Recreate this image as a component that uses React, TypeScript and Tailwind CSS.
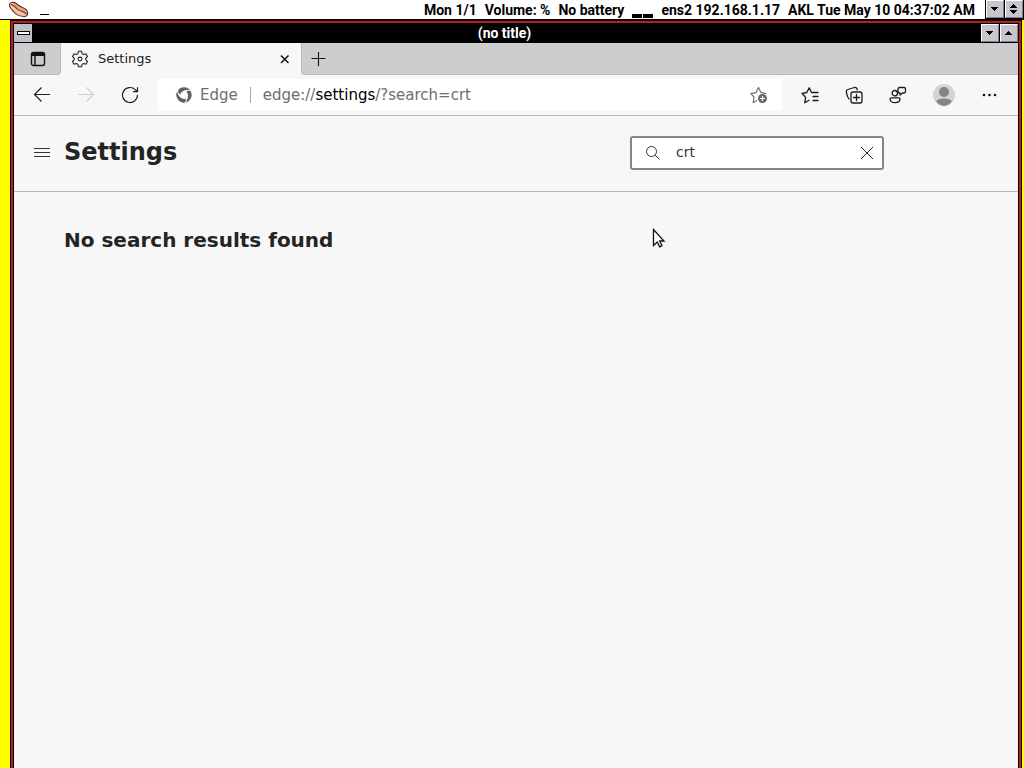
import { useState } from "react";
import type { ReactNode } from "react";

const statusItems = ["Mon 1/1", "Volume: %", "No battery"];

function BevelButton({ label, children }: { label: string; children: ReactNode }) {
  return (
    <button
      aria-label={label}
      className="flex h-[18px] w-[18px] shrink-0 items-center justify-center border border-t-white border-r-[#808088] border-b-[#808088] border-l-white bg-[#c6c6cc]"
    >
      {children}
    </button>
  );
}

function DownArrow() {
  return (
    <svg width="8" height="4" viewBox="0 0 8 4" shapeRendering="crispEdges">
      <path d="M0 0h7v1H0zM1 1h5v1H1zM2 2h3v1H2zM3 3h1v1H3z" fill="#000" />
    </svg>
  );
}

function UpArrow() {
  return (
    <svg width="8" height="4" viewBox="0 0 8 4" shapeRendering="crispEdges">
      <path d="M3 0h1v1H3zM2 1h3v1H2zM1 2h5v1H1zM0 3h7v1H0z" fill="#000" />
    </svg>
  );
}

function HotDog() {
  return (
    <svg width="22" height="18" viewBox="0 0 22 18">
      <path d="M2 2.500C4 0 7.500 1.500 10 4c2.500 2.200 6 2.500 8.500 5 2 2.500 1.500 6.500-2 6.500-4.500 0-9-2-11.500-5.500C3 8 .5 5 2 2.500z" fill="#f6c3a8" stroke="#5c2a1c" strokeWidth="1.100" />
      <path d="M3 3.500c2.500 0 4.500 3 7 5 3 2 6 1.500 8.500 4.500" fill="none" stroke="#8d3424" strokeWidth="1.200" />
      <path d="M5 2.500c2 .3 4 2.500 6 4s4.500 1.500 6.500 3.500" fill="none" stroke="#e09a78" strokeWidth="1.200" />
    </svg>
  );
}

function StatusBar() {
  return (
    <header className="flex h-5 shrink-0 items-center border-b border-black bg-white pl-2 font-[Roboto,'Liberation_Sans',sans-serif] text-[14px] leading-4 font-bold text-black">
      <HotDog />
      <span className="ml-2.5 mt-2.5 h-px w-[9px] bg-black" />
      <div className="ml-auto flex items-center gap-2 pr-2.5 whitespace-nowrap">
        {statusItems.map((item) => (
          <span key={item}>{item}</span>
        ))}
        <span className="mt-3 flex gap-px">
          <span className="h-1 w-2.5 bg-black" />
          <span className="h-1 w-2.5 bg-black" />
        </span>
        <span>ens2 192.168.1.17</span>
        <span>AKL Tue May 10 04:37:02 AM</span>
      </div>
      <div className="flex h-full gap-px border-x border-black bg-black">
        <BevelButton label="Minimize">
          <DownArrow />
        </BevelButton>
        <BevelButton label="Restore">
          <span className="flex flex-col gap-0.5">
            <UpArrow />
            <DownArrow />
          </span>
        </BevelButton>
      </div>
    </header>
  );
}

function TitleBar() {
  return (
    <div className="flex h-[19px] shrink-0 items-center border-b border-black bg-black font-[Roboto,'Liberation_Sans',sans-serif] text-[14px] leading-4 font-bold text-white">
      <button aria-label="Window menu" className="flex h-[18px] w-[18px] items-center justify-center bg-[#c0c0c8]">
        <span className="h-1 w-[13px] border border-black bg-white" />
      </button>
      <span className="flex-1 pr-1 text-center">(no title)</span>
      <div className="flex gap-px">
        <BevelButton label="Minimize window">
          <DownArrow />
        </BevelButton>
        <BevelButton label="Maximize window">
          <UpArrow />
        </BevelButton>
      </div>
    </div>
  );
}

function TabStrip() {
  return (
    <div className="flex h-8 shrink-0 bg-[#f7f7f7]">
      <button aria-label="Tab actions" className="flex w-[47px] items-center justify-center rounded-br-[4px] border-r border-b border-[#b9b9b9] bg-[#cdcdcd] pl-0.5">
        <svg width="16" height="16" viewBox="0 0 16 16" fill="none" stroke="#111">
          <rect x="1.500" y="1.500" width="13" height="13" rx="2" strokeWidth="1.400" />
          <path d="M1.500 3.500v-.5a1.500 1.500 0 0 1 1.500-1.500h10a1.500 1.500 0 0 1 1.500 1.500v1.500h-13z" fill="#111" />
          <path d="M5 4v10.500" strokeWidth="1.400" />
        </svg>
      </button>
      <div className="flex w-60 items-center pr-[7px] pl-2.5">
        <svg width="18" height="18" viewBox="0 0 18 18" fill="none" stroke="#222" strokeWidth="1.100" strokeLinejoin="round">
          <path d="M7.400 1.300h3.200l.5 2.300 1.500.9 2.300-.7 1.600 2.700L14.800 8.100v1.800l1.700 1.600-1.600 2.700-2.300-.7-1.500.9-.5 2.300H7.400l-.5-2.300-1.500-.9-2.300.7-1.600-2.700 1.700-1.600V8.100L1.500 6.500l1.600-2.700 2.300.7 1.500-.9z" />
          <circle cx="9" cy="9" r="1.900" />
        </svg>
        <span className="ml-[9px] text-[13px] leading-4 text-[#202020]">Settings</span>
        <button aria-label="Close tab" className="ml-auto p-1">
          <svg width="10" height="10" viewBox="0 0 10 10" stroke="#111" strokeWidth="1.500">
            <path d="M1 1.500l7.500 7.500M8.500 1.500L1 9" />
          </svg>
        </button>
      </div>
      <div className="flex flex-1 items-center rounded-bl-[4px] border-b border-l border-[#b9b9b9] bg-[#cdcdcd] pl-2">
        <button aria-label="New tab">
          <svg width="16" height="16" viewBox="0 0 16 16" stroke="#111" strokeWidth="1.100">
            <path d="M8.500 1v14M1.500 7.500h14" />
          </svg>
        </button>
      </div>
    </div>
  );
}

const blade = "M1.800 5.200C3.800 1.300 8.600-.2 12.600 1.600c2.300 1 3.700 2.800 4.200 5.200-1.300-1.600-3.600-2.400-5.800-2.200C8 4.900 5.900 6.500 5.400 9 3.200 8.700 1.700 7.200 1.800 5.200z";

function EdgeLogo() {
  return (
    <svg width="18" height="18" viewBox="0 0 18 18" fill="#5f6164" stroke="#fff" strokeWidth=".9" strokeLinejoin="round">
      <path d={blade} />
      <path d={blade} transform="rotate(120 9 9)" />
      <path d={blade} transform="rotate(240 9 9)" />
    </svg>
  );
}

function Toolbar() {
  return (
    <nav className="flex h-[41px] shrink-0 items-center border-b border-[#b5b5b5] bg-[#f7f7f7] pl-[19px] pr-[21px]">
      <div className="flex w-[125px] gap-[26px]">
        <button aria-label="Back">
          <svg width="18" height="18" viewBox="0 0 18 18" fill="none" stroke="#222" strokeWidth="1.200">
            <path d="M17 8.500H1.500M8.500 1.500l-7 7 7 7" />
          </svg>
        </button>
        <button aria-label="Forward" disabled>
          <svg width="18" height="18" viewBox="0 0 18 18" fill="none" stroke="#cecece" strokeWidth="1.200">
            <path d="M1 8.500h15.500M9.500 1.500l7 7-7 7" />
          </svg>
        </button>
        <button aria-label="Refresh">
          <svg width="18" height="18" viewBox="0 0 18 18" fill="none" stroke="#222" strokeWidth="1.200">
            <path d="M16.500 9a7.500 7.500 0 1 1-2.300-5.400L16.200 5.500M16.500 1.200v4.500h-4.500" />
          </svg>
        </button>
      </div>
      <div className="flex h-8 flex-1 items-center rounded-[3px] bg-white pr-3.5 pl-[17px] text-[15px] leading-5 text-[#6e6e6e]">
        <EdgeLogo />
        <span className="ml-[7px]">Edge</span>
        <span className="mx-3 h-4 w-px bg-[#a8a8a8]" />
        <a href="#settings" className="flex-1">
          edge://<span className="text-black">settings</span>/?search=crt
        </a>
        <button aria-label="Add to favorites">
          <svg width="18" height="18" viewBox="0 0 18 18" fill="none" stroke="#707070" strokeWidth="1.200" strokeLinejoin="round">
            <path d="M7 14.500l-3.800 2 .8-5.500L.8 7.600l5.100-.9L8.500 1.500l2.600 5.200 5.100.9" />
            <circle cx="12.500" cy="12.500" r="4.500" fill="#666" stroke="none" />
            <path d="M12.500 9.900v5.200M9.900 12.500h5.200" stroke="#fff" />
          </svg>
        </button>
      </div>
      <div className="ml-[19px] flex items-center gap-[26px]">
        <button aria-label="Favorites">
          <svg width="18" height="18" viewBox="0 0 18 18" fill="none" stroke="#1b1b1b" strokeWidth="1.300" strokeLinejoin="round" strokeLinecap="round">
            <path d="M8 14.300l-4.200 2.500.8-5.400L1 7.300l4.800-.8L8.200 1.800l2.300 4.700H17M12 10.500H17M12 14.500H17" />
          </svg>
        </button>
        <button aria-label="Collections">
          <svg width="18" height="18" viewBox="0 0 18 18" fill="none" stroke="#1b1b1b" strokeWidth="1.300" strokeLinecap="round">
            <rect x="6" y="6" width="11" height="11" rx="2" />
            <path d="M11.500 8.500v6M8.500 11.500h6M4 13L2.500 10.500 1.300 6c-.3-1.200.3-2 1.500-2.500l6.500-2c1.500-.4 2.300.2 2.700 1.500l.2.800" />
          </svg>
        </button>
        <button aria-label="Send feedback">
          <svg width="18" height="18" viewBox="0 0 18 18" fill="none" stroke="#1b1b1b" strokeWidth="1.300" strokeLinejoin="round">
            <circle cx="5.800" cy="7.200" r="2.700" />
            <path d="M2.300 11.800h7.500a1.200 1.200 0 0 1 1.200 1.300c0 2.300-2 3.600-4.900 3.600S1 15.300 1 13.100a1.200 1.200 0 0 1 1.300-1.300zM10.500 1.500H15A1.500 1.500 0 0 1 16.500 3v2.500A1.500 1.500 0 0 1 15 7h-1.500l-2.500 2V7h-.5A1.500 1.500 0 0 1 9 5.500V3a1.500 1.500 0 0 1 1.500-1.500z" />
          </svg>
        </button>
        <button aria-label="Profile">
          <svg width="22" height="22" viewBox="0 0 22 22">
            <circle cx="11" cy="11" r="11" fill="#d5d3d0" />
            <circle cx="11" cy="8" r="5" fill="#858585" />
            <path d="M3.200 17.500c1.300-2.200 3.800-3 7.800-3s6.500.8 7.800 3A11 11 0 0 1 11 22a11 11 0 0 1-7.800-4.500z" fill="#858585" />
          </svg>
        </button>
        <button aria-label="More">
          <svg width="16" height="18" viewBox="0 0 16 18" fill="#111">
            <circle cx="3" cy="9" r="1.300" />
            <circle cx="8.500" cy="9" r="1.300" />
            <circle cx="14" cy="9" r="1.300" />
          </svg>
        </button>
      </div>
    </nav>
  );
}

function SettingsPage() {
  const [query, setQuery] = useState("crt");
  return (
    <main className="relative flex-1 bg-[#f7f7f7] text-[#242424]">
      <div className="flex h-[76px] items-center border-b border-[#b5b5b5] pr-[134px] pb-0.5 pl-5">
        <button aria-label="Menu">
          <svg width="16" height="10" viewBox="0 0 16 10" stroke="#333">
            <path d="M0 .5h16M0 4.500h16M0 8.500h16" />
          </svg>
        </button>
        <h1 className="ml-3.5 pb-0.5 text-2xl leading-8 font-bold">Settings</h1>
        <div className="ml-auto flex h-[34px] w-[254px] items-center rounded-[3px] border-2 border-[#858585] bg-white pr-2 pl-[13px]">
          <svg width="16" height="16" viewBox="0 0 16 16" fill="none" stroke="#333">
            <circle cx="6.500" cy="6.500" r="5" />
            <path d="M10.200 10.200L14.500 14.500" />
          </svg>
          <input
            aria-label="Search settings"
            value={query}
            onChange={(e) => setQuery(e.target.value)}
            className="ml-[15px] min-w-0 flex-1 bg-transparent pb-0.5 text-sm leading-5 text-[#333] outline-none"
          />
          <button aria-label="Clear search" onClick={() => setQuery("")}>
            <svg width="14" height="14" viewBox="0 0 14 14" stroke="#222">
              <path d="M1 1l12 12M13 1L1 13" />
            </svg>
          </button>
        </div>
      </div>
      <h2 className="px-[50px] pt-[34px] text-xl leading-7 font-bold">No search results found</h2>
      <svg className="absolute top-28 left-[638px]" width="14" height="22" viewBox="0 0 14 22">
        <path d="M1.500 1.500v16l3.800-3.500 2.300 4.800 2.300-1.100-2.200-4.700H12z" fill="#fff" stroke="#111" strokeWidth="1.300" />
      </svg>
    </main>
  );
}

export default function App() {
  return (
    <div className="flex min-h-screen flex-col bg-[#ffff00]">
      <StatusBar />
      <div className="mr-0.5 ml-2.5 flex flex-1 flex-col border-x border-t border-[#300000] bg-[#a8242c] px-0.5 pt-0.5">
        <div className="flex flex-1 flex-col border-x border-t border-black font-['DejaVu_Sans',sans-serif]">
          <TitleBar />
          <TabStrip />
          <Toolbar />
          <SettingsPage />
        </div>
      </div>
    </div>
  );
}
